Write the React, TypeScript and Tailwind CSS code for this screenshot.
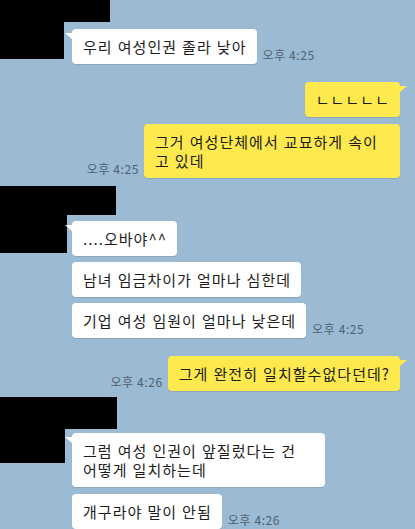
import React from "react";

const font = { fontFamily: "'Noto Sans CJK KR', 'Noto Sans', sans-serif" };

const textCls = "text-[15px] leading-[19px] tracking-[1.05px] [word-spacing:0.6px] text-[#1d1d1d]";

function InBubble({ children, tail = false, w }: { children: React.ReactNode; tail?: boolean; w?: string }) {
  return (
    <div className={`relative bg-white rounded-[4px] pl-[11px] pr-[10px] py-[8px] ${textCls} shadow-[0_1px_1px_rgba(0,0,0,0.12)] whitespace-nowrap ${w ?? ""}`}>
      {tail && (
        <svg className="absolute left-[-7px] top-[4px]" width="8" height="8" viewBox="0 0 8 8">
          <polygon points="0,0 8,0 8,7" fill="#ffffff" />
        </svg>
      )}
      {children}
    </div>
  );
}

function OutBubble({ children, tail = false, w }: { children: React.ReactNode; tail?: boolean; w?: string }) {
  return (
    <div className={`relative bg-[#fee94e] rounded-[4px] pl-[11px] pr-[10px] py-[8px] ${textCls} shadow-[0_1px_1px_rgba(0,0,0,0.12)] whitespace-nowrap ${w ?? ""}`}>
      {tail && (
        <svg className="absolute right-[-7px] top-[4px]" width="8" height="8" viewBox="0 0 8 8">
          <polygon points="0,0 8,0 0,7" fill="#fee94e" />
        </svg>
      )}
      {children}
    </div>
  );
}

function Time({ children }: { children: React.ReactNode }) {
  return (
    <div className="text-[12px] leading-[14px] tracking-[0.6px] text-[#4f5f6f] mb-[2px] whitespace-nowrap">
      {children}
    </div>
  );
}

export default function App() {
  return (
    <div className="w-[415px] h-[529px] overflow-hidden bg-[#9bbbd4] flex flex-col" style={font}>
      {/* group 1 */}
      <div className="flex items-start mt-[-8px] shrink-0">
        <div className="w-[64px] h-[67px] bg-black shrink-0" />
        <div className="flex flex-col items-start">
          <div className="w-[46px] h-[30px] bg-black" />
          <div className="ml-[8px] mt-[7px] flex items-end gap-[6px]">
            <InBubble tail>우리 여성인권 졸라 낮아</InBubble>
            <Time>오후 4:25</Time>
          </div>
        </div>
      </div>

      {/* out 1 */}
      <div className="mt-[18px] flex justify-end pr-[15px] shrink-0">
        <OutBubble tail>ㄴㄴㄴㄴㄴ</OutBubble>
      </div>

      {/* out 2 */}
      <div className="mt-[7px] flex justify-end items-end gap-[5px] pr-[15px] shrink-0">
        <Time>오후 4:25</Time>
        <OutBubble w="w-[256px]">
          그거 여성단체에서 교묘하게 속이
          <br />고 있데
        </OutBubble>
      </div>

      {/* group 2 */}
      <div className="flex items-start mt-[8px] shrink-0">
        <div className="w-[67px] h-[67px] bg-black shrink-0" />
        <div className="flex flex-col items-start">
          <div className="w-[49px] h-[29px] bg-black" />
          <div className="ml-[5px] mt-[6px] flex flex-col items-start gap-[6px]">
            <InBubble tail>....오바야^^</InBubble>
            <InBubble>남녀 임금차이가 얼마나 심한데</InBubble>
            <div className="flex items-end gap-[6px]">
              <InBubble>기업 여성 임원이 얼마나 낮은데</InBubble>
              <Time>오후 4:25</Time>
            </div>
          </div>
        </div>
      </div>

      {/* out 3 */}
      <div className="mt-[18px] flex justify-end items-end gap-[5px] pr-[15px] shrink-0">
        <Time>오후 4:26</Time>
        <OutBubble tail>그게 완전히 일치할수없다던데?</OutBubble>
      </div>

      {/* group 3 */}
      <div className="flex items-start mt-[6px] shrink-0">
        <div className="w-[65px] h-[66px] bg-black shrink-0" />
        <div className="flex flex-col items-start">
          <div className="w-[52px] h-[32px] bg-black" />
          <div className="ml-[7px] mt-[4px] flex flex-col items-start gap-[7px]">
            <InBubble tail w="w-[253px]">
              그럼 여성 인권이 앞질렀다는 건
              <br />
              어떻게 일치하는데
            </InBubble>
            <div className="flex items-end gap-[6px]">
              <InBubble>개구라야 말이 안됨</InBubble>
              <Time>오후 4:26</Time>
            </div>
          </div>
        </div>
      </div>
    </div>
  );
}
